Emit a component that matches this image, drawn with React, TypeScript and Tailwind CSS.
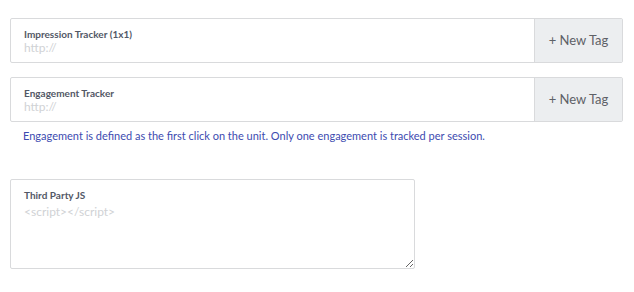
import React from 'react'

const font = { fontFamily: 'Lato, "Open Sans", sans-serif' }

function TagField({ label }: { label: string }) {
  return (
    <div className="flex h-[45px] w-[613px] rounded-[2px] border border-[#d9dadc] bg-white">
      <div className="flex flex-1 flex-col justify-center pl-[13px] pt-[1px]">
        <label className="text-[10px] font-bold leading-[12px] text-[#525866]">{label}</label>
        <input
          placeholder="http://"
          className="mt-[1px] bg-transparent text-[12px] leading-[14px] text-[#333] outline-none placeholder:text-[#d0d2d5]"
        />
      </div>
      <button className="w-[88px] border-l border-[#d9dadc] bg-[#eceef0] text-[13px] text-[#5e6167]">
        + New Tag
      </button>
    </div>
  )
}

export default function App() {
  return (
    <div className="h-[292px] w-[634px] bg-white pl-[10px] pt-[18px]" style={font}>
      <TagField label="Impression Tracker (1x1)" />
      <div className="mt-[14px]">
        <TagField label="Engagement Tracker" />
      </div>
      <p className="mt-[7px] pl-[13px] text-[11px] leading-[14px] text-[#3d4bb0]">
        Engagement is defined as the first click on the unit. Only one engagement is tracked per session.
      </p>
      <div className="mt-[36px] flex h-[90px] w-[405px] flex-col rounded-[2px] border border-[#d9dadc] bg-white pl-[13px] pt-[9px]">
        <label className="text-[10px] font-bold leading-[12px] text-[#525866]">Third Party JS</label>
        <textarea
          placeholder="<script></script>"
          className="mt-[4px] flex-1 resize-y bg-transparent pb-[2px] pr-[2px] text-[12px] leading-[14px] text-[#333] outline-none placeholder:text-[#d0d2d5]"
        />
      </div>
    </div>
  )
}
